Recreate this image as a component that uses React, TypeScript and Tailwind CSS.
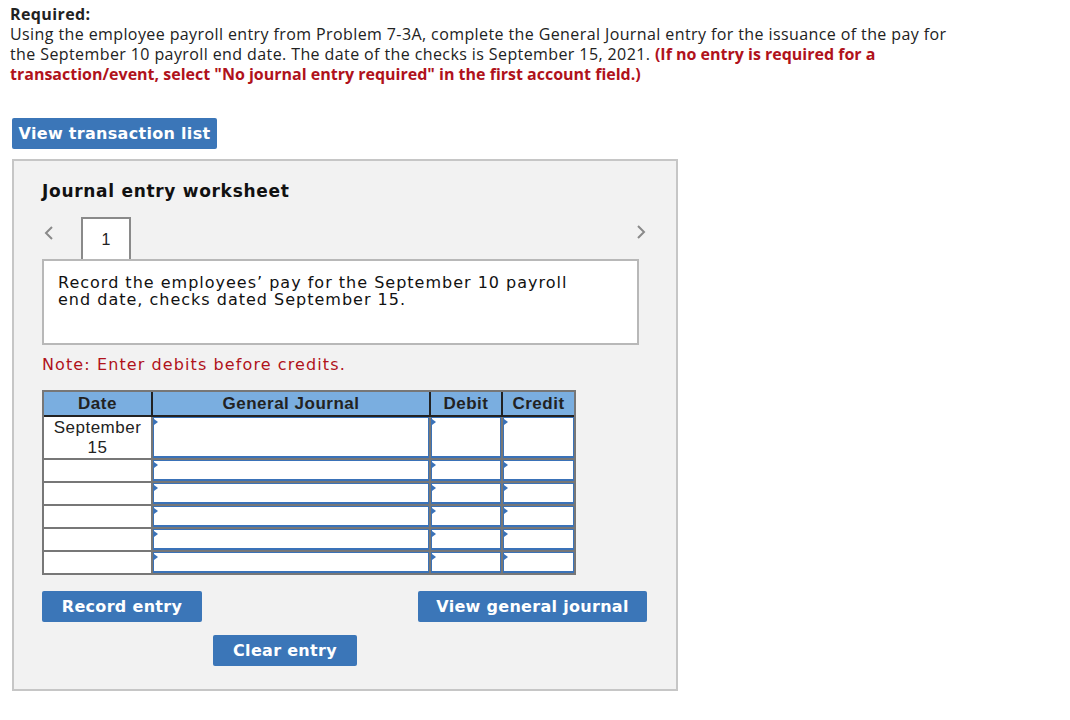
import React from "react";

const rows = [0, 1, 2, 3, 4, 5];

function Chevron({ dir }: { dir: "left" | "right" }) {
  return (
    <svg width="10" height="16" viewBox="0 0 10 16" className="text-[#8a8a8a]">
      <polyline
        points={dir === "left" ? "8,2 2,8 8,14" : "2,2 8,8 2,14"}
        fill="none"
        stroke="currentColor"
        strokeWidth="2"
      />
    </svg>
  );
}

function InputCell({ tall }: { tall?: boolean }) {
  return (
    <div className={`relative bg-white ${tall ? "h-[41px]" : "h-[21px]"}`}>
      <div className="h-full border border-b-2 border-[#3a72b8]" />
      {/* little corner marker */}
      <span className="absolute left-[1px] top-[2px] w-0 h-0 border-y-[3px] border-y-transparent border-l-[4px] border-l-[#3a72b8]" />
    </div>
  );
}

function Btn({ label, className }: { label: string; className: string }) {
  return (
    <button
      className={`h-[31px] rounded-[2px] bg-[#3b76b8] text-white font-bold text-[16px] tracking-[0.3px] font-['DejaVu_Sans',sans-serif] ${className}`}
    >
      {label}
    </button>
  );
}

export default function App() {
  return (
    <div className="w-[1070px] h-[720px] bg-white pl-[10px] pt-[4px] text-[#222]">
      {/* Instructions */}
      <div className="font-['Open_Sans',Arial,sans-serif] text-[16px] leading-[20px] tracking-[0.4px]">
        <p className="font-bold">Required:</p>
        <p>
          Using the employee payroll entry from Problem 7-3A, complete the General Journal entry for the issuance of the pay for
          <br />
          the September 10 payroll end date. The date of the checks is September 15, 2021.{" "}
          <span className="font-bold tracking-normal text-[#b0121b]">
            (If no entry is required for a
            <br />
            transaction/event, select "No journal entry required" in the first account field.)
          </span>
        </p>
      </div>

      <Btn label="View transaction list" className="mt-[34px] ml-[2px] w-[205px]" />

      {/* Worksheet panel */}
      <div className="mt-[10px] ml-[2px] w-[666px] h-[532px] border-2 border-[#c6c6c6] bg-[#f2f2f2] pl-[28px] pt-[20px] font-['DejaVu_Sans',Verdana,sans-serif]">
        <h2 className="text-[17px] leading-[20px] font-bold tracking-[0.7px] text-[#111]">Journal entry worksheet</h2>

        <div className="mt-[16px] w-[604px] flex items-center">
          <div className="w-[39px] pl-[2px] pt-[2px] self-start mt-[6px]">
            <Chevron dir="left" />
          </div>
          <div className="w-[50px] h-[42px] border-2 border-b-0 border-[#8a8a8a] bg-white flex items-center justify-center text-[16px] font-['Liberation_Sans',Arial,sans-serif] pt-[1px]">
            1
          </div>
          <div className="flex-1 flex justify-end self-start mt-[7px]">
            <Chevron dir="right" />
          </div>
        </div>

        <div className="w-[597px] h-[86px] border-2 border-[#b8b8b8] bg-white pl-[14px] pt-[13px] text-[16px] leading-[17px] tracking-[1px] text-[#111]">
          Record the employees’ pay for the September 10 payroll
          <br />
          end date, checks dated September 15.
        </div>

        <p className="mt-[10px] text-[16px] leading-[20px] tracking-[1.1px] text-[#b0121b]">Note: Enter debits before credits.</p>

        {/* Journal table */}
        <div className="mt-[15px] w-[534px] border-2 border-[#777] font-['Liberation_Sans',Arial,sans-serif] text-[17px] tracking-[0.5px]">
          <div className="grid grid-cols-[109px_278px_72px_71px] h-[25px] bg-[#7aaee0] border-b-2 border-[#222] font-bold leading-[23px] text-center text-[#222]">
            <div className="border-r-2 border-[#222]">Date</div>
            <div className="border-r-2 border-[#222]">General Journal</div>
            <div className="border-r-2 border-[#222]">Debit</div>
            <div>Credit</div>
          </div>
          <div className="grid grid-cols-[107px_276px_70px_71px] gap-[2px] bg-[#777]">
            {rows.map((r) => (
              <React.Fragment key={r}>
                <div className={`bg-white text-center leading-[20px] pt-[1px] ${r === 0 ? "h-[41px]" : "h-[21px]"}`}>
                  {r === 0 ? (
                    <>
                      September
                      <br />
                      15
                    </>
                  ) : null}
                </div>
                <InputCell tall={r === 0} />
                <InputCell tall={r === 0} />
                <InputCell tall={r === 0} />
              </React.Fragment>
            ))}
          </div>
        </div>

        <div className="mt-[16px] w-[605px] flex justify-between">
          <Btn label="Record entry" className="w-[160px]" />
          <Btn label="View general journal" className="w-[229px]" />
        </div>
        <Btn label="Clear entry" className="mt-[13px] ml-[171px] w-[144px]" />
      </div>
    </div>
  );
}
